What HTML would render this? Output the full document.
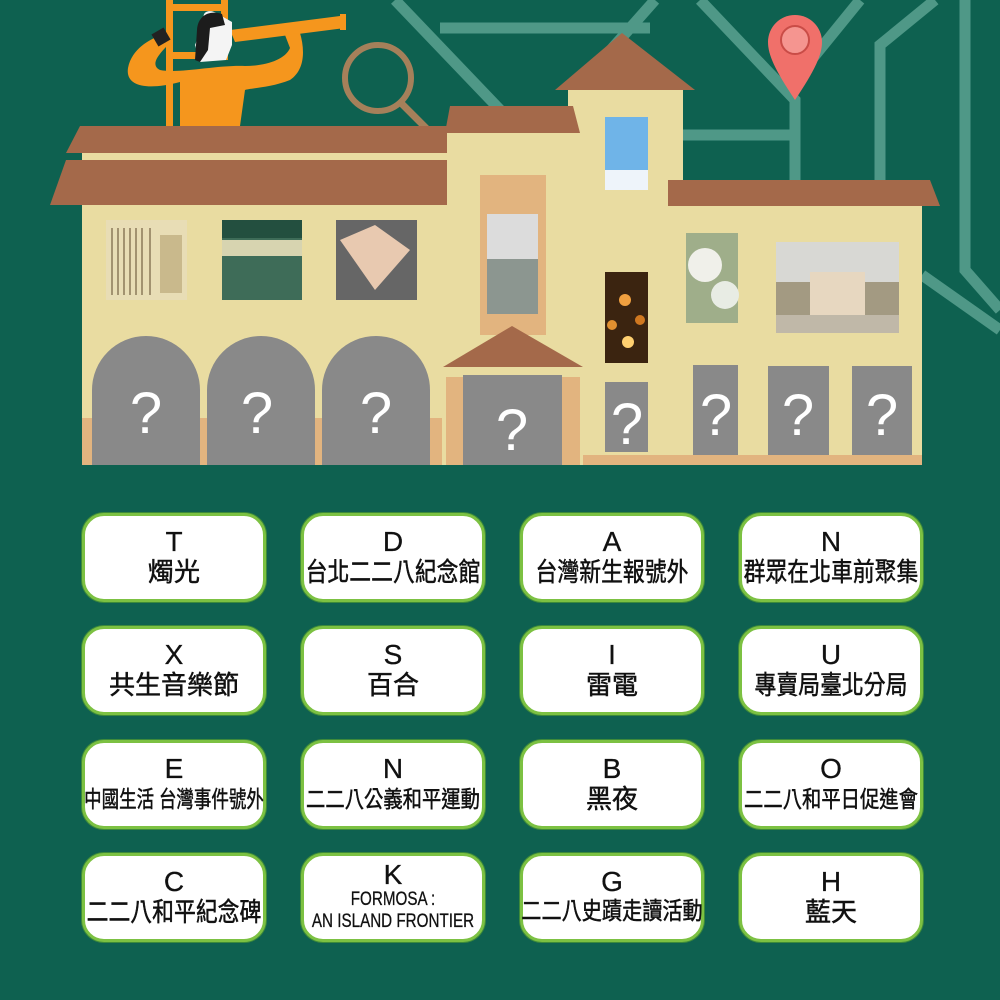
<!DOCTYPE html>
<html><head><meta charset="utf-8"><style>
body{margin:0;width:1000px;height:1000px;background:#0e6150;overflow:hidden;position:relative;font-family:"Liberation Sans","Noto Sans CJK TC",sans-serif}
.c{position:absolute;width:178px;height:83px;border:3px solid #7cc142;border-radius:22px;background:#fff;box-shadow:0 0 0 1px #3d8a3a;text-align:center;color:#111}
.l{font-size:28px;line-height:28px;margin-top:12px;-webkit-text-stroke:.3px #111}
.t{font-size:26px;line-height:32px;white-space:nowrap;display:block;margin:0 -40px;-webkit-text-stroke:.5px #111}
.n{transform:scaleX(.84)}
.nn{transform:scaleX(.76)}
.k{font-size:19px;line-height:22px;transform:scaleX(.8);display:block;margin:0 -40px;white-space:nowrap;-webkit-text-stroke:.3px #111}
</style></head><body>
<svg width="1000" height="480" style="position:absolute;left:0;top:0">
<g stroke="#4f9887" stroke-width="11" fill="none">
<path d="M395 0 L505 115"/><path d="M655 0 L600 62"/><path d="M440 28 H650"/>
<path d="M700 0 L795 100 V180"/><path d="M860 0 L795 80"/><path d="M683 135 H795"/>
<path d="M935 0 L880 45 V180"/><path d="M965 0 V270 L1000 310"/><path d="M922 275 L1000 330"/>
</g>
<path d="M795 100 C775 70 768 55 768 42 A27 27 0 0 1 822 42 C822 55 815 70 795 100Z" fill="#f0706a"/>
<circle cx="795" cy="40" r="14" fill="#f59590" stroke="#c94c47" stroke-width="2"/>
<circle cx="378" cy="78" r="33" fill="none" stroke="#a5805a" stroke-width="6"/>
<path d="M400 102 L430 132" stroke="#a5805a" stroke-width="7"/>
<g fill="#f5961d">
<rect x="166" y="0" width="7" height="126"/><rect x="221" y="0" width="7" height="60"/>
<rect x="166" y="4" width="60" height="7"/><rect x="166" y="52" width="60" height="7"/>
<path d="M230 30 L340 16 L345 28 L235 42Z"/>
<path d="M180 126 L180 82 C150 90 125 88 128 68 C132 48 150 40 160 35 L168 45 C158 55 150 65 160 70 C180 74 215 65 245 66 C265 66 285 60 290 48 L285 35 L300 33 C305 50 305 70 290 80 C270 88 250 88 245 90 L240 126Z"/>
</g>
<rect x="340" y="14" width="6" height="16" fill="#f5961d"/>
<path d="M205 20 C200 12 210 8 218 14 L232 22 L232 45 L226 60 L200 62 L195 45Z" fill="#f4f4f4"/>
<path d="M195 60 L197 30 C198 15 210 10 222 14 L225 25 L210 28 L208 50 L200 62Z" fill="#1c1c1c"/>
<rect x="154" y="30" width="14" height="14" fill="#222" transform="rotate(-30 161 37)"/>
<path d="M66 153 L80 126 H447 V153Z" fill="#a4694a"/>
<rect x="82" y="153" width="365" height="8" fill="#e9dca1"/>
<path d="M50 205 L66 160 H447 V205Z" fill="#a4694a"/>
<rect x="82" y="205" width="840" height="260" fill="#e9dca1"/>
<rect x="447" y="130" width="125" height="80" fill="#e9dca1"/>
<rect x="568" y="90" width="115" height="120" fill="#e9dca1"/>
<path d="M445 133 L450 106 H573 L580 133Z" fill="#a4694a"/>
<path d="M555 90 L622 33 L695 90Z" fill="#a4694a"/>
<path d="M668 206 V180 H930 L940 206Z" fill="#a4694a"/>
<rect x="480" y="175" width="66" height="160" fill="#e2b47f"/>
<rect x="82" y="418" width="360" height="47" fill="#e2b47f"/>
<rect x="446" y="377" width="134" height="88" fill="#e2b47f"/>
<rect x="583" y="455" width="339" height="10" fill="#e2b47f"/>
<path d="M443 367 L512 326 L583 367Z" fill="#a4694a"/>
<rect x="106" y="220" width="81" height="80" fill="#e8ddb5"/><g stroke="#8a7a5a" stroke-width="1.5"><path d="M112 228V295M118 228V295M124 228V295M130 228V295M136 228V295M142 228V295M150 228V295"/></g><rect x="160" y="235" width="22" height="58" fill="#c9b98c"/>
<rect x="222" y="220" width="80" height="80" fill="#3e6c58"/><rect x="222" y="220" width="80" height="18" fill="#234f3f"/><rect x="222" y="240" width="80" height="16" fill="#d7d4b0"/>
<rect x="336" y="220" width="81" height="80" fill="#666"/><path d="M340 240 L375 225 L410 250 L375 290Z" fill="#e8c9b0"/>
<rect x="487" y="214" width="51" height="100" fill="#8c9690"/><rect x="487" y="214" width="51" height="45" fill="#dcdcdc"/>
<rect x="605" y="117" width="43" height="73" fill="#6fb4e8"/><rect x="605" y="170" width="43" height="20" fill="#eef4fa"/>
<rect x="605" y="272" width="43" height="91" fill="#3b2410"/><circle cx="625" cy="300" r="6" fill="#f0a040"/><circle cx="640" cy="320" r="5" fill="#d07820"/><circle cx="612" cy="325" r="5" fill="#e09030"/><circle cx="628" cy="342" r="6" fill="#ffd070"/>
<rect x="686" y="233" width="52" height="90" fill="#9fae8a"/><circle cx="705" cy="265" r="17" fill="#f0f0ea"/><circle cx="725" cy="295" r="14" fill="#e8ece4"/>
<rect x="776" y="242" width="123" height="91" fill="#a39a82"/><rect x="776" y="242" width="123" height="40" fill="#d8d8d4"/><rect x="810" y="272" width="55" height="45" fill="#e7d7c0"/><rect x="776" y="315" width="123" height="18" fill="#c0b8a8"/>
<g fill="#898989">
<path d="M92 465 V390 A54 54 0 0 1 200 390 V465Z"/><path d="M207 465 V390 A54 54 0 0 1 315 390 V465Z"/><path d="M322 465 V390 A54 54 0 0 1 430 390 V465Z"/>
<rect x="463" y="375" width="99" height="90"/><rect x="605" y="382" width="43" height="70"/><rect x="693" y="365" width="45" height="90"/><rect x="768" y="366" width="61" height="89"/><rect x="852" y="366" width="60" height="89"/>
</g>
<g fill="#fff" font-family="Liberation Sans" font-size="58" text-anchor="middle">
<text x="146" y="433">?</text><text x="257" y="433">?</text><text x="376" y="433">?</text><text x="512" y="450">?</text><text x="627" y="444">?</text><text x="716" y="435">?</text><text x="798" y="435">?</text><text x="882" y="435">?</text>
</g>
</svg>
<div class="c" style="left:82px;top:513px"><div class="l">T</div><span class="t">燭光</span></div>
<div class="c" style="left:301px;top:513px"><div class="l">D</div><span class="t n">台北二二八紀念館</span></div>
<div class="c" style="left:520px;top:513px"><div class="l">A</div><span class="t n">台灣新生報號外</span></div>
<div class="c" style="left:739px;top:513px"><div class="l">N</div><span class="t n">群眾在北車前聚集</span></div>
<div class="c" style="left:82px;top:626px"><div class="l">X</div><span class="t">共生音樂節</span></div>
<div class="c" style="left:301px;top:626px"><div class="l">S</div><span class="t">百合</span></div>
<div class="c" style="left:520px;top:626px"><div class="l">I</div><span class="t">雷電</span></div>
<div class="c" style="left:739px;top:626px"><div class="l">U</div><span class="t n">專賣局臺北分局</span></div>
<div class="c" style="left:82px;top:740px"><div class="l">E</div><span class="t nn" style="font-size:23px">中國生活 台灣事件號外</span></div>
<div class="c" style="left:301px;top:740px"><div class="l">N</div><span class="t n" style="font-size:23px">二二八公義和平運動</span></div>
<div class="c" style="left:520px;top:740px"><div class="l">B</div><span class="t">黑夜</span></div>
<div class="c" style="left:739px;top:740px"><div class="l">O</div><span class="t n" style="font-size:23px">二二八和平日促進會</span></div>
<div class="c" style="left:82px;top:853px"><div class="l">C</div><span class="t n">二二八和平紀念碑</span></div>
<div class="c" style="left:301px;top:853px"><div class="l" style="margin-top:5px">K</div><span class="k">FORMOSA :</span><span class="k">AN ISLAND FRONTIER</span></div>
<div class="c" style="left:520px;top:853px"><div class="l">G</div><span class="t n" style="font-size:24px">二二八史蹟走讀活動</span></div>
<div class="c" style="left:739px;top:853px"><div class="l">H</div><span class="t">藍天</span></div>
</body></html>
